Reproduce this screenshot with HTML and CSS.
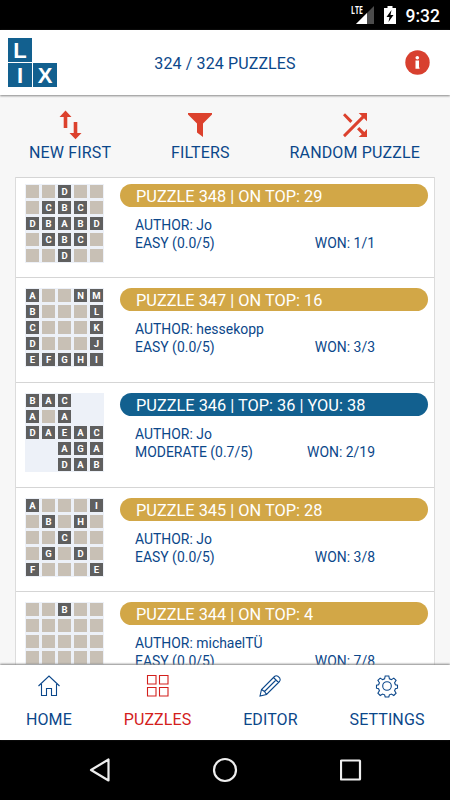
FILE: index.html
```
<!DOCTYPE html>
<html lang="en">
<head>
<meta charset="utf-8">
<title>LIX Puzzles</title>
<link rel="stylesheet" href="styles.css">
</head>
<body>
<div class="status">
  <span class="lte">LTE</span>
  <svg class="signal" width="18" height="18" viewBox="0 0 18 18"><path d="M18 0V18H0Z" fill="#4c4c4c"/><path d="M11 7V18H0Z" fill="#fff"/></svg>
  <svg class="battery" width="12" height="19" viewBox="0 0 12 19"><path d="M3.500 0h5v2H12v16H0V2h3.500Z" fill="#fff"/><path d="M7.500 4 2.500 11H5.500L4.500 16 9.500 9H6.500Z" fill="#000"/></svg>
  <span class="clock">9:32</span>
</div>
<header class="header">
  <div class="logo"><span>L</span><span class="logo-gap"></span><span>I</span><span>X</span></div>
  <h1 class="count">324 / 324 PUZZLES</h1>
  <svg class="info" width="25" height="25" viewBox="0 0 25 25"><circle cx="12.500" cy="12.500" r="12.200" fill="#d8402f"/><circle cx="12.300" cy="7.700" r="1.800" fill="#fff"/><path d="M10.300 10.500h3.700v7h.5v1.300h-4v-8.300Z" fill="#fff"/></svg>
</header>
<main class="main">
  <div class="tools">
    <div class="tool tool-sort">
      <svg width="24" height="30" viewBox="0 0 24 30"><path d="M7.500 .5 13.500 7H9.300V18H5.700V7H1.500ZM15.700 12h3.600v11h4.200L17.500 29.200 11.500 23h4.200Z" fill="#dc412d"/></svg>
      <span>NEW FIRST</span>
    </div>
    <div class="tool tool-filter">
      <svg width="24" height="30" viewBox="0 0 24 30"><path d="M0 3H24V4.500L15 13.500V27L9 22.500V13.500L0 4.500Z" fill="#dc412d"/></svg>
      <span>FILTERS</span>
    </div>
    <div class="tool tool-random">
      <svg width="24" height="30" viewBox="0 0 24 30"><path d="M15.700 3H24V11.300L21 8.300 2 27.200 0 25 18.800 6ZM2 3.200 9.500 10.700 7.300 12.900 0 5.300ZM16.300 17 21.300 21.900 24 19V27H15.700L18.800 24.200 14 19.300Z" fill="#dc412d"/></svg>
      <span>RANDOM PUZZLE</span>
    </div>
  </div>
  <div class="list">
    <article class="row">
      <div class="board"><i></i><i></i><b>D</b><i></i><i></i><i></i><b>C</b><b>B</b><b>C</b><i></i><b>D</b><b>B</b><b>A</b><b>B</b><b>D</b><i></i><b>C</b><b>B</b><b>C</b><i></i><i></i><i></i><b>D</b><i></i><i></i></div>
      <div class="body"><h2 class="pill">PUZZLE 348 | ON TOP: 29</h2><p>AUTHOR: Jo</p><p class="stats"><span>EASY (0.0/5)</span><span>WON: 1/1</span></p></div>
    </article>
    <article class="row">
      <div class="board"><b>A</b><i></i><i></i><b>N</b><b>M</b><b>B</b><i></i><i></i><i></i><b>L</b><b>C</b><i></i><i></i><i></i><b>K</b><b>D</b><i></i><i></i><i></i><b>J</b><b>E</b><b>F</b><b>G</b><b>H</b><b>I</b></div>
      <div class="body"><h2 class="pill">PUZZLE 347 | ON TOP: 16</h2><p>AUTHOR: hessekopp</p><p class="stats"><span>EASY (0.0/5)</span><span>WON: 3/3</span></p></div>
    </article>
    <article class="row">
      <div class="board"><b>B</b><b>A</b><b>C</b><s></s><s></s><b>A</b><i></i><b>A</b><s></s><s></s><b>D</b><b>A</b><b>E</b><b>A</b><b>C</b><s></s><s></s><b>A</b><b>G</b><b>A</b><s></s><s></s><b>D</b><b>A</b><b>B</b></div>
      <div class="body"><h2 class="pill pill-played">PUZZLE 346 | TOP: 36 | YOU: 38</h2><p>AUTHOR: Jo</p><p class="stats"><span>MODERATE (0.7/5)</span><span>WON: 2/19</span></p></div>
    </article>
    <article class="row">
      <div class="board"><b>A</b><i></i><i></i><i></i><b>I</b><i></i><b>B</b><i></i><b>H</b><i></i><i></i><i></i><b>C</b><i></i><i></i><i></i><b>G</b><i></i><b>D</b><i></i><b>F</b><i></i><i></i><i></i><b>E</b></div>
      <div class="body"><h2 class="pill">PUZZLE 345 | ON TOP: 28</h2><p>AUTHOR: Jo</p><p class="stats"><span>EASY (0.0/5)</span><span>WON: 3/8</span></p></div>
    </article>
    <article class="row">
      <div class="board"><i></i><i></i><b>B</b><i></i><i></i><i></i><i></i><i></i><i></i><i></i><i></i><i></i><i></i><i></i><i></i><i></i><i></i><i></i><i></i><i></i><i></i><i></i><i></i><i></i><i></i></div>
      <div class="body"><h2 class="pill">PUZZLE 344 | ON TOP: 4</h2><p>AUTHOR: michaelTÜ</p><p class="stats"><span>EASY (0.0/5)</span><span>WON: 7/8</span></p></div>
    </article>
  </div>
</main>
<nav class="tabs">
  <a class="tab tab-home">
    <svg width="24" height="24" viewBox="0 0 24 24"><path d="M1.500 12 12 2 22.500 12M4.500 10V21.500H9.500V14.500H14.500V21.500H19.500V10" /></svg>
    <span>HOME</span>
  </a>
  <a class="tab tab-puzzles">
    <svg width="24" height="24" viewBox="0 0 24 24"><path d="M1.500 1.500h8.500v8.500H1.500ZM13.500 1.500h8.500v8.500H13.500ZM1.500 13.500h8.500v8.500H1.500ZM13.500 13.500h8.500v8.500H13.500Z"/></svg>
    <span>PUZZLES</span>
  </a>
  <a class="tab tab-editor">
    <svg width="24" height="24" viewBox="0 0 24 24"><path d="M2 22 3.500 15.500 16.500 2.500Q18 1.200 19.800 2.200L21.800 4.200Q22.800 6 21.500 7.500L8.500 20.500ZM3.500 15.500 6.500 17.500 8.500 20.500M6.500 17.500 18 6M15.500 3.500 20.500 8.500"/></svg>
    <span>EDITOR</span>
  </a>
  <a class="tab tab-settings">
    <svg width="24" height="24" viewBox="0 0 24 24"><circle cx="12" cy="12" r="4.300"/><path d="M10.200 2h3.600l.6 2.800 2 .8 2.400-1.500 2.300 2.300-1.500 2.400.8 2 2.100.5v2.900l-2.100.6-.8 2 1.500 2.400-2.300 2.300-2.400-1.500-2 .8-.6 2.200h-3.600l-.6-2.200-2-.8-2.400 1.500-2.300-2.300 1.500-2.400-.8-2-2.100-.6v-2.900l2.100-.5.8-2-1.500-2.400 2.300-2.300 2.400 1.500 2-.8Z"/></svg>
    <span>SETTINGS</span>
  </a>
</nav>
<div class="sysnav">
  <svg width="22" height="26" viewBox="0 0 22 26"><path d="M20.500 2.500V23.500L3 13Z"/></svg>
  <svg width="26" height="26" viewBox="0 0 26 26"><circle cx="13" cy="13" r="11"/></svg>
  <svg width="22" height="26" viewBox="0 0 22 26"><rect x="1" y="3.500" width="19" height="19" rx=".5"/></svg>
</div>
</body>
</html>
```
FILE: styles.css
```
* { box-sizing: border-box; }

body {
  margin: 0;
  width: 450px;
  height: 800px;
  overflow: hidden;
  display: flex;
  flex-direction: column;
  font-family: Roboto, "Liberation Sans", sans-serif;
  color: #0b478a;
  background: #f7f7f7;
}

h1, h2, p { margin: 0; font-weight: 400; }

.status {
  height: 30px;
  flex: none;
  background: #000;
  color: #fff;
  display: flex;
  justify-content: flex-end;
  align-items: flex-start;
  padding: 6px 10px 0 0;
}
.lte {
  font: 700 10.5px/9px "Open Sans", sans-serif;
  width: 11px;
  height: 10px;
  margin-right: -6px;
  transform: scaleX(.66);
  transform-origin: left;
}
.signal { margin-right: 10px; }
.battery { margin-right: 10px; }
.clock { font-size: 17.5px; line-height: 20px; font-weight: 500; }

.header {
  height: 65px;
  flex: none;
  background: #fff;
  display: flex;
  align-items: center;
  position: relative;
  padding: 0 20px 0 8px;
  box-shadow: 0 1px 2px #888;
  z-index: 1;
}
.logo { display: grid; grid-template-columns: 24px 24px; grid-auto-rows: 24px; gap: 1px; }
.logo span {
  background: #12608f;
  color: #fff;
  font: 700 22px/25px "Liberation Sans", sans-serif;
  text-align: center;
}
.logo .logo-gap { background: none; }
.count { flex: 1; font-size: 16px; line-height: 20px; margin-left: -12px; padding-top: 2px; text-align: center; letter-spacing: .12px; }

.main { flex: 1; min-height: 0; overflow: hidden; padding: 0 15px; }
.tools { height: 82px; padding-top: 15px; display: flex; justify-content: space-between; margin: 0 15px 0 14px; }
.tool { display: flex; flex-direction: column; align-items: center; font-size: 16px; line-height: 20px; letter-spacing: .15px; }
.tool svg { margin-bottom: 3px; }

.list { background: #fff; border: solid #dcdcdc; border-width: 0 1px; }
.row {
  height: 104.67px;
  border-top: 1px solid #d5d5d5;
  padding: 10px 6px 0 9px;
  display: flex;
  gap: 16px;
}
.row:first-child { height: 100.3px; padding-top: 6px; }

.board {
  width: 79px;
  height: 79px;
  flex: none;
  padding: 1px;
  background: #edf1f8;
  display: grid;
  grid-template-columns: repeat(5, 13px);
  grid-auto-rows: 13px;
  gap: 3px;
}
.board i { background: #c8c0b5; }
.board b { background: #5f5f5f; color: #fff; font-size: 9.5px; line-height: 13px; text-align: center; }

.body { flex: 1; font-size: 13.95px; line-height: 18px; }
.pill {
  height: 23px;
  margin-bottom: 9px;
  padding-left: 16px;
  border-radius: 12px;
  background: #d2a747;
  color: #fff;
  font-size: 16.35px;
  line-height: 26px;
}
.pill-played { background: #12608f; }
.body p { padding: 0 53px 0 15px; }
.stats { display: flex; justify-content: space-between; }

.tabs {
  height: 75px;
  flex: none;
  display: flex;
  justify-content: space-between;
  padding: 9px 25.5px 0 26px;
  background: #fff;
  box-shadow: 0 -1px 2px #888;
  position: relative;
}
.tab { display: flex; flex-direction: column; align-items: center; gap: 12px; font-size: 16px; line-height: 20px; letter-spacing: .1px; }
.tab svg { fill: none; stroke: currentColor; stroke-width: 1.1; }
.tab-puzzles { color: #d3201c; }

.sysnav {
  height: 60px;
  flex: none;
  background: #000;
  display: flex;
  align-items: center;
  justify-content: center;
  gap: 102px;
}
.sysnav svg { fill: none; stroke: #eee; stroke-width: 2.2; stroke-linejoin: round; }
```
